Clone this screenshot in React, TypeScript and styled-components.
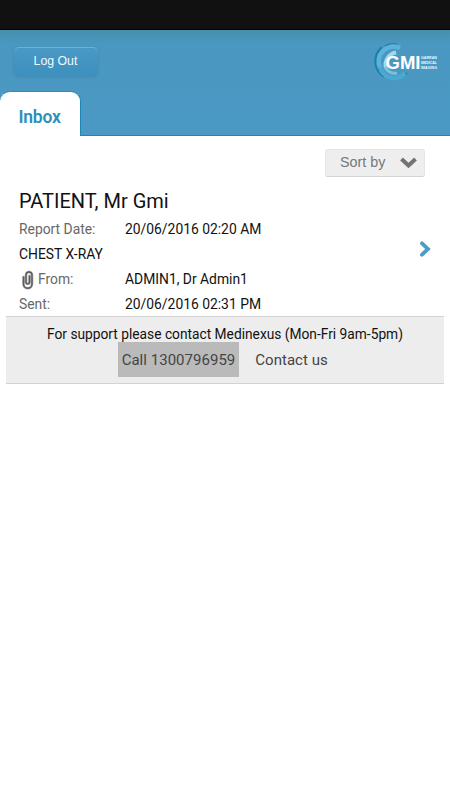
import React from "react";
import styled, { createGlobalStyle } from "styled-components";

const GlobalStyle = createGlobalStyle`
  * { box-sizing: border-box; }
  body { margin: 0; background: #fff; font-family: Roboto, "Liberation Sans", sans-serif; color: #111; }
`;

const Screen = styled.div`
  display: flex;
  flex-direction: column;
  height: 800px;
  background: #fff;
`;

const StatusBar = styled.div`
  height: 30px;
  background: #111;
  border-bottom: 1px solid #000;
`;

const Header = styled.header`
  display: flex;
  flex-direction: column;
  justify-content: space-between;
  height: 106px;
  background: linear-gradient(#468fae 0, #4a98c1 14px, #4a99c4 100%);
  border-bottom: 1px solid #1c86b5;
`;

const HeaderRow = styled.div`
  display: flex;
  justify-content: space-between;
  align-items: flex-start;
  padding: 11px 11px 0 14px;
`;

const LogOut = styled.button`
  width: 84px;
  height: 29px;
  margin-top: 6px;
  padding: 0 1px 3px 0;
  border: 0;
  border-top: 1px solid #6cb0d4;
  border-radius: 5px;
  background: linear-gradient(#4a99c5, #3d8fbd);
  box-shadow: 0 1px 3px rgba(25, 95, 135, 0.3);
  color: #f2fafe;
  font: 12.3px "Liberation Sans", sans-serif;
`;

const Tab = styled.div`
  width: 81px;
  height: 45px;
  margin-bottom: -1px;
  padding: 6px 1px 0 0;
  display: flex;
  align-items: center;
  justify-content: center;
  background: #fff;
  border-right: 1px solid #1c86b5;
  border-top: 1px solid #2b8cba;
  border-radius: 10px 10px 0 0;
  color: #2b90bb;
  font-size: 17.5px;
  font-weight: 600;
  letter-spacing: -0.2px;
`;

const Toolbar = styled.div`
  display: flex;
  justify-content: flex-end;
  padding: 13px 25px 0 0;
`;

const SortButton = styled.button`
  display: flex;
  align-items: center;
  justify-content: space-between;
  width: 100px;
  height: 28px;
  padding: 0 7px 2px 14px;
  border: 1px solid #e6e6e6;
  border-bottom-color: #d4d4d4;
  border-radius: 3px;
  background: #eee;
  color: #777;
  font: 14.3px "Liberation Sans", sans-serif;
`;

const Report = styled.article`
  display: flex;
  align-items: center;
  justify-content: space-between;
  height: 139px;
  padding: 4px 18px 0 19px;
`;

const Details = styled.div`
  display: flex;
  flex-direction: column;
  padding-top: 5px;
`;

const Patient = styled.h1`
  margin: 0;
  height: 32px;
  font-size: 20px;
  font-weight: 400;
  line-height: 32px;
`;

const Row = styled.div`
  display: grid;
  grid-template-columns: 106px auto;
  height: 24.8px;
  line-height: 25px;
  font-size: 13.87px;
  white-space: nowrap;
`;

const Label = styled.span<{ $dark?: boolean }>`
  display: flex;
  align-items: center;
  color: ${(p) => (p.$dark ? "#111" : "#686868")};
`;

const Support = styled.footer`
  margin: 0 6px;
  height: 68px;
  padding-top: 7px;
  background: #ededed;
  border-top: 1px solid #d2d2d2;
  border-bottom: 1px solid #d2d2d2;
  text-align: center;
`;

const SupportText = styled.div`
  height: 18px;
  line-height: 20px;
  font-size: 13.76px;
`;

const Links = styled.div`
  display: flex;
  padding-left: 112px;
`;

const SupportLink = styled.a<{ $pressed?: boolean }>`
  height: 35px;
  width: ${(p) => (p.$pressed ? "121px" : "105px")};
  line-height: 36px;
  font-size: 15px;
  letter-spacing: 0.03px;
  white-space: nowrap;
  color: #444;
  background: ${(p) => (p.$pressed ? "#bababa" : "transparent")};
`;

const Logo = () => (
  <svg width="68" height="42" viewBox="0 0 68 42" fill="none">
    <path d="M26 3A18 18 0 0 0 14 5" stroke="#2380ae" strokeWidth="1.5" />
    <path d="M36 32A17 17 0 0 1 19 37" stroke="#2380ae" strokeWidth="2.5" />
    <path d="M11 6.5A18 18 0 0 0 13 35.5" stroke="#1c7cac" strokeWidth="2.5" />
    <path d="M9 27A15 15 0 0 1 29 7" stroke="#5cb2d9" strokeWidth="4.5" />
    <path d="M9 26A14.5 14.5 0 0 0 34 32" stroke="#4ba8d1" strokeWidth="4.5" />
    <path d="M15 27A12.5 12.5 0 0 1 25 11.5" stroke="#a2d8ef" strokeWidth="4" />
    <path d="M14 26A11 11 0 0 0 26 32" stroke="#78c1e1" strokeWidth="3" />
    <text x="14.5" y="28" fill="#fff" fontFamily="Liberation Sans, sans-serif" fontWeight="700" fontSize="18" textLength="35" lengthAdjust="spacingAndGlyphs">GMI</text>
    <g fill="#e9f7fd" fontFamily="Liberation Sans, sans-serif" fontWeight="700" fontSize="4">
      <text x="50" y="18" textLength="16" lengthAdjust="spacingAndGlyphs">GARRAN</text>
      <text x="50" y="23" textLength="16" lengthAdjust="spacingAndGlyphs">MEDICAL</text>
      <text x="50" y="28" textLength="16" lengthAdjust="spacingAndGlyphs">IMAGING</text>
    </g>
  </svg>
);

const Clip = () => (
  <svg width="19" height="20" viewBox="0 0 19 20" fill="none" strokeLinecap="round">
    <path d="M4.5 7V14A4 4 0 0 0 13 14V5A3 3 0 0 0 7 5V12.5A1.8 1.8 0 0 0 10.5 12.5V6" stroke="#aaa" strokeWidth="2.6" />
    <path d="M4.5 7V14A4 4 0 0 0 13 14V5A3 3 0 0 0 7 5V12.5A1.8 1.8 0 0 0 10.5 12.5V6" stroke="#5c5c5c" strokeWidth="1.4" />
  </svg>
);

const DownChevron = () => (
  <svg width="18" height="14" viewBox="0 0 18 14" fill="none">
    <path d="M2.5 4L9.5 10.5L16.5 4" stroke="#737373" strokeWidth="4" />
  </svg>
);

const RightChevron = () => (
  <svg width="14" height="18" viewBox="0 0 14 18" fill="none">
    <path d="M4 3.3L10 9L4 14.7" stroke="#4b9cc8" strokeWidth="3.8" strokeLinecap="round" />
  </svg>
);

export default function App() {
  return (
    <Screen>
      <GlobalStyle />
      <StatusBar />
      <Header>
        <HeaderRow>
          <LogOut>Log Out</LogOut>
          <Logo />
        </HeaderRow>
        <Tab>Inbox</Tab>
      </Header>
      <Toolbar>
        <SortButton>
          Sort by
          <DownChevron />
        </SortButton>
      </Toolbar>
      <Report>
        <Details>
          <Patient>PATIENT, Mr Gmi</Patient>
          <Row><Label>Report Date:</Label><span>20/06/2016 02:20 AM</span></Row>
          <Row><Label $dark>CHEST X-RAY</Label></Row>
          <Row><Label><Clip />From:</Label><span>ADMIN1, Dr Admin1</span></Row>
          <Row><Label>Sent:</Label><span>20/06/2016 02:31 PM</span></Row>
        </Details>
        <RightChevron />
      </Report>
      <Support>
        <SupportText>For support please contact Medinexus (Mon-Fri 9am-5pm)</SupportText>
        <Links>
          <SupportLink $pressed>Call 1300796959</SupportLink>
          <SupportLink>Contact us</SupportLink>
        </Links>
      </Support>
    </Screen>
  );
}
